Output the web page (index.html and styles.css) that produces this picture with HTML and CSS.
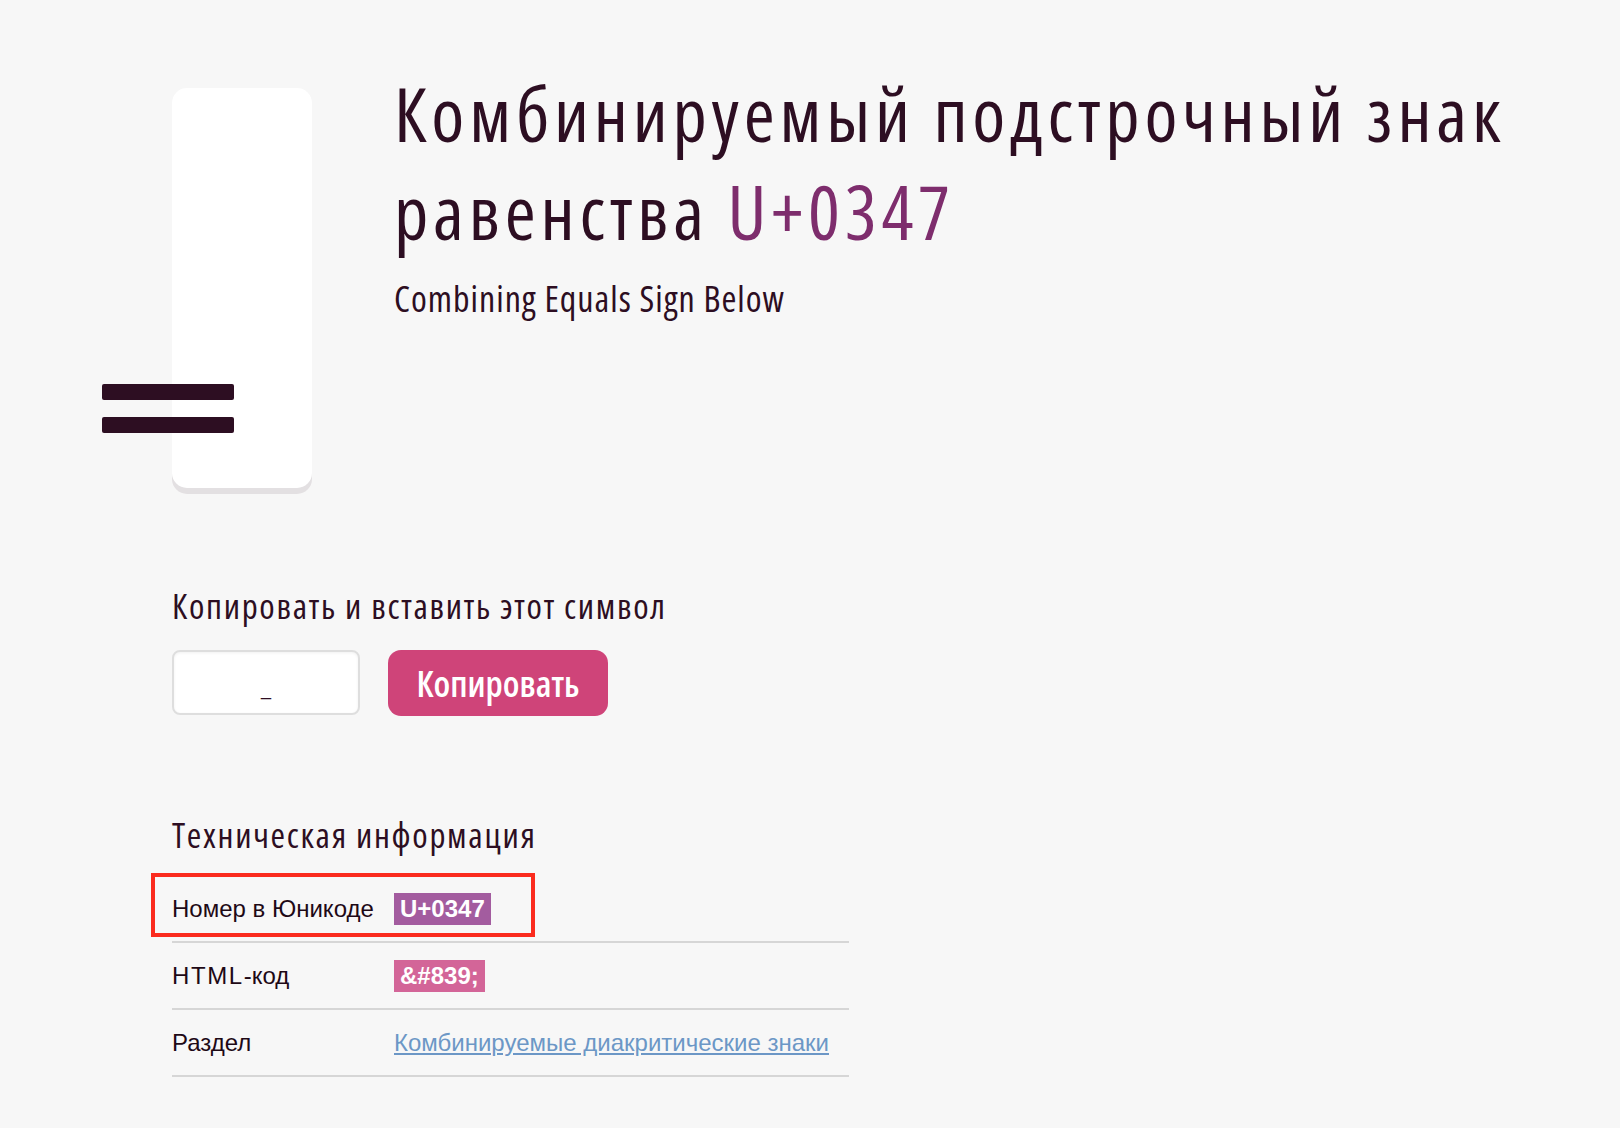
FILE: index.html
```html
<!DOCTYPE html>
<html lang="ru">
<head>
<meta charset="utf-8">
<title>U+0347</title>
<link rel="stylesheet" href="styles.css">
</head>
<body>
<main class="page">
  <section class="hero">
    <div class="glyph-card">
      <div class="glyph">
        <span class="glyph-bar"></span>
        <span class="glyph-bar"></span>
      </div>
    </div>
    <div class="hero-text">
      <h1 class="title">Комбинируемый подстрочный знак равенства <span class="title-code">U+0347</span></h1>
      <p class="subtitle">Combining Equals Sign Below</p>
    </div>
  </section>

  <section class="copy">
    <h2 class="section-title">Копировать и вставить этот символ</h2>
    <div class="copy-row">
      <input class="copy-input" type="text" value="_" readonly>
      <button class="copy-btn" type="button">Копировать</button>
    </div>
  </section>

  <section class="tech">
    <h2 class="section-title">Техническая информация</h2>
    <div class="tech-table">
      <div class="tech-row tech-row--marked">
        <div class="tech-label">Номер в Юникоде</div>
        <div class="tech-value"><span class="badge badge--purple">U+0347</span></div>
      </div>
      <div class="tech-row">
        <div class="tech-label"><span class="caps">HTML</span>-код</div>
        <div class="tech-value"><span class="badge badge--pink">&amp;#839;</span></div>
      </div>
      <div class="tech-row">
        <div class="tech-label">Раздел</div>
        <div class="tech-value"><a class="tech-link" href="#">Комбинируемые диакритические знаки</a></div>
      </div>
    </div>
  </section>
</main>
</body>
</html>
```

FILE: styles.css
```css
html, body {
  margin: 0;
  padding: 0;
}

body {
  background: #f7f7f7;
  color: #2d0e22;
  font-family: "Liberation Sans", Arial, sans-serif;
}

.page {
  padding: 88px 0 40px 172px;
}

.hero {
  display: flex;
  align-items: flex-start;
  gap: 82px;
}

.glyph-card {
  position: relative;
  flex: 0 0 140px;
  height: 400px;
  background: #ffffff;
  border-radius: 15px;
  box-shadow: 0 6px 0 #e3e0e2;
}

.glyph {
  position: absolute;
  left: -70px;
  top: 296px;
  display: flex;
  flex-direction: column;
  gap: 17px;
}

.glyph-bar {
  display: block;
  width: 132px;
  height: 16px;
  background: #2d0e22;
  border-radius: 2px;
}

.hero-text {
  margin-top: -24px;
}

.title {
  margin: 0;
  font-family: "Open Sans", sans-serif;
  font-stretch: 75%;
  font-weight: 400;
  font-size: 75px;
  line-height: 98px;
  letter-spacing: 4.8px;
  color: #2d0e22;
}

.title-code {
  color: #7e2d6d;
}

.subtitle {
  margin: 17px 0 0;
  font-family: "Open Sans", sans-serif;
  font-stretch: 75%;
  font-size: 36px;
  line-height: 44px;
  letter-spacing: 1px;
}

.copy {
  margin-top: 96px;
}

.section-title {
  margin: 0;
  font-family: "Open Sans", sans-serif;
  font-stretch: 75%;
  font-weight: 400;
  font-size: 35px;
  line-height: 44px;
  letter-spacing: 1.7px;
  color: #2d0e22;
}

.copy-row {
  display: flex;
  gap: 28px;
  margin-top: 22px;
}

.copy-input {
  box-sizing: border-box;
  width: 188px;
  height: 65px;
  border: 2px solid #dedede;
  border-radius: 8px;
  background: #ffffff;
  box-shadow: inset 0 1px 3px rgba(0, 0, 0, 0.06);
  text-align: center;
  font-family: "Liberation Sans", Arial, sans-serif;
  font-size: 18px;
  color: #2d0e22;
  padding: 14px 0 0;
  outline: none;
}

.copy-btn {
  box-sizing: border-box;
  width: 220px;
  height: 66px;
  border: none;
  border-radius: 13px;
  background: #cf4479;
  color: #ffffff;
  font-family: "Open Sans", sans-serif;
  font-stretch: 75%;
  font-weight: 600;
  font-size: 36px;
  padding: 0;
}

.tech {
  margin-top: 97px;
}

.tech-table {
  width: 677px;
  margin-top: 19px;
}

.tech-row {
  position: relative;
  display: flex;
  align-items: center;
  height: 65px;
  border-bottom: 2px solid #d6d6d6;
}

.tech-row--marked::before {
  content: "";
  position: absolute;
  left: -21px;
  top: -3px;
  width: 384px;
  height: 64px;
  box-sizing: border-box;
  border: 4px solid #fb2b1e;
}

.tech-label {
  flex: 0 0 222px;
  font-size: 24px;
  color: #1e0916;
}

.caps {
  letter-spacing: 1.6px;
}

.tech-value {
  font-size: 24px;
}

.badge {
  display: inline-block;
  padding: 0 6px;
  height: 32px;
  line-height: 32px;
  font-weight: 700;
  color: #ffffff;
}

.badge--purple {
  background: #a35c9f;
}

.badge--pink {
  background: #d36598;
}

.tech-link {
  color: #6c97c6;
  text-decoration: underline;
}
```
